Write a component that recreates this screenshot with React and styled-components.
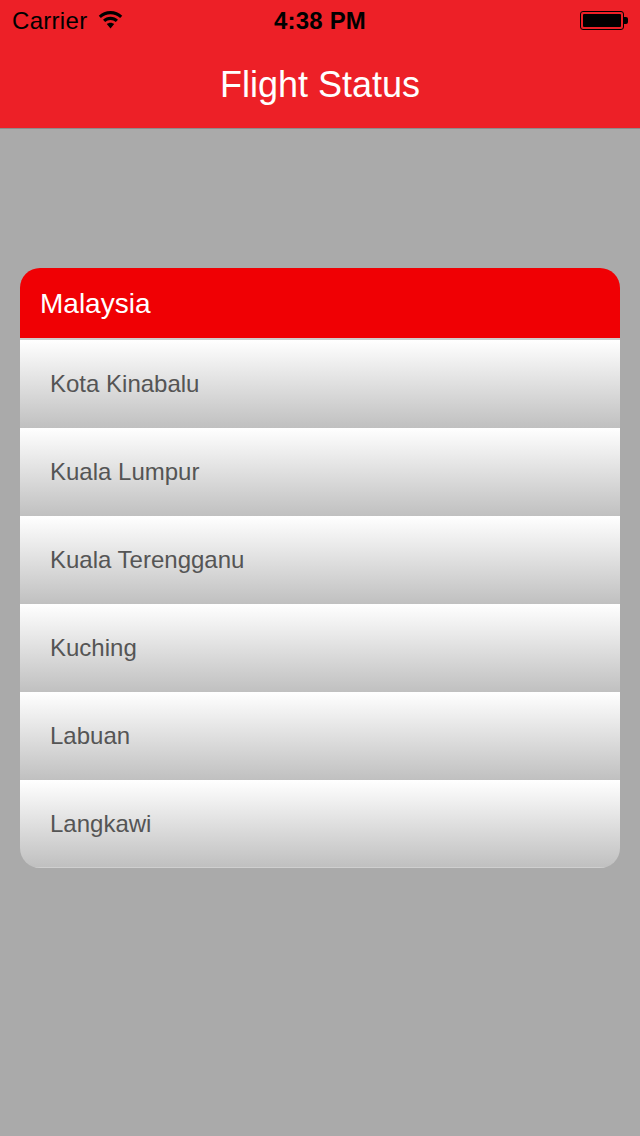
import React from 'react';
import styled, { createGlobalStyle } from 'styled-components';

const cities = [
  'Kota Kinabalu',
  'Kuala Lumpur',
  'Kuala Terengganu',
  'Kuching',
  'Labuan',
  'Langkawi',
];

const WifiIcon = () => (
  <svg width="25" height="18" viewBox="0 0 26 19" fill="#000">
    <path d="M13 0C8.2 0 3.8 1.9.6 5l2.2 2.4C5.400 4.900 9 3.300 13 3.300s7.600 1.600 10.200 4.100L25.400 5C22.200 1.900 17.800 0 13 0z" />
    <path d="M13 6.200c-3 0-5.800 1.200-7.900 3.100l2.300 2.400C8.900 10.300 10.900 9.500 13 9.500s4.100.8 5.600 2.200l2.300-2.400C18.800 7.400 16 6.200 13 6.200z" />
    <path d="M13 12.300c-1.500 0-2.900.6-3.900 1.500L13 18.400l3.900-4.600c-1-.9-2.400-1.500-3.900-1.500z" />
  </svg>
);

const App = () => (
  <>
    <GlobalStyle />
    <Screen>
      <NavBar>
        <StatusBar>
          <Carrier>
            <span>Carrier</span>
            <WifiIcon />
          </Carrier>
          <Time>4:38 PM</Time>
          <Battery>
            <BatteryBody>
              <BatteryFill />
            </BatteryBody>
            <BatteryTip />
          </Battery>
        </StatusBar>
        <Title>Flight Status</Title>
      </NavBar>
      <Content>
        <Card>
          <CardHeader>Malaysia</CardHeader>
          <CityList>
            {cities.map(city => (
              <City key={city}>{city}</City>
            ))}
          </CityList>
        </Card>
      </Content>
    </Screen>
  </>
);

export default App;

const GlobalStyle = createGlobalStyle`
  html, body {
    margin: 0;
    padding: 0;
    background: #aaaaaa;
  }

  * {
    box-sizing: border-box;
  }
`;

const Screen = styled.div`
  width: 640px;
  height: 1136px;
  overflow: hidden;
  background: #aaaaaa;
  font-family: "Liberation Sans", Arial, sans-serif;
`;

const NavBar = styled.header`
  height: 129px;
  background: #ed2027;
  border-bottom: 1px solid #8c8c8c;
`;

const StatusBar = styled.div`
  position: relative;
  height: 40px;
  padding: 2px 12px 0 12px;
  display: flex;
  align-items: center;
  justify-content: space-between;
  color: #000;
  font-size: 24px;
`;

const Carrier = styled.div`
  display: flex;
  align-items: center;
  gap: 11px;

  span {
    letter-spacing: 0.3px;
  }

  svg {
    margin-top: -2px;
  }
`;

const Time = styled.div`
  position: absolute;
  left: 0;
  right: 0;
  text-align: center;
  font-weight: bold;
  letter-spacing: 0.2px;
`;

const Battery = styled.div`
  display: flex;
  align-items: center;
  margin-top: -1px;
`;

const BatteryBody = styled.div`
  width: 44px;
  height: 19px;
  padding: 2px;
  border: 1px solid #000;
  border-radius: 3px;
`;

const BatteryFill = styled.div`
  height: 100%;
  background: #000;
  border-radius: 1px;
`;

const BatteryTip = styled.div`
  width: 4px;
  height: 7px;
  background: #000;
  border-radius: 0 2px 2px 0;
`;

const Title = styled.h1`
  margin: 0;
  height: 88px;
  padding-top: 1px;
  line-height: 88px;
  text-align: center;
  color: #fff;
  font-size: 36px;
  font-weight: normal;
`;

const Content = styled.main`
  padding: 139px 20px 0;
`;

const Card = styled.section`
  border-radius: 20px;
  overflow: hidden;
`;

const CardHeader = styled.div`
  height: 72px;
  padding: 2px 20px 0;
  display: flex;
  align-items: center;
  background: #f00004;
  border-bottom: 2px solid #cdcdcd;
  color: #fff;
  font-size: 28px;
`;

const CityList = styled.div`
  display: flex;
  flex-direction: column;
`;

const City = styled.div`
  height: 88px;
  padding-left: 30px;
  display: flex;
  align-items: center;
  background: linear-gradient(#ffffff, #c0c0c0);
  color: #555555;
  font-size: 24px;

  &:last-child {
    border-bottom: 1px solid #cfcfcf;
  }
`;
